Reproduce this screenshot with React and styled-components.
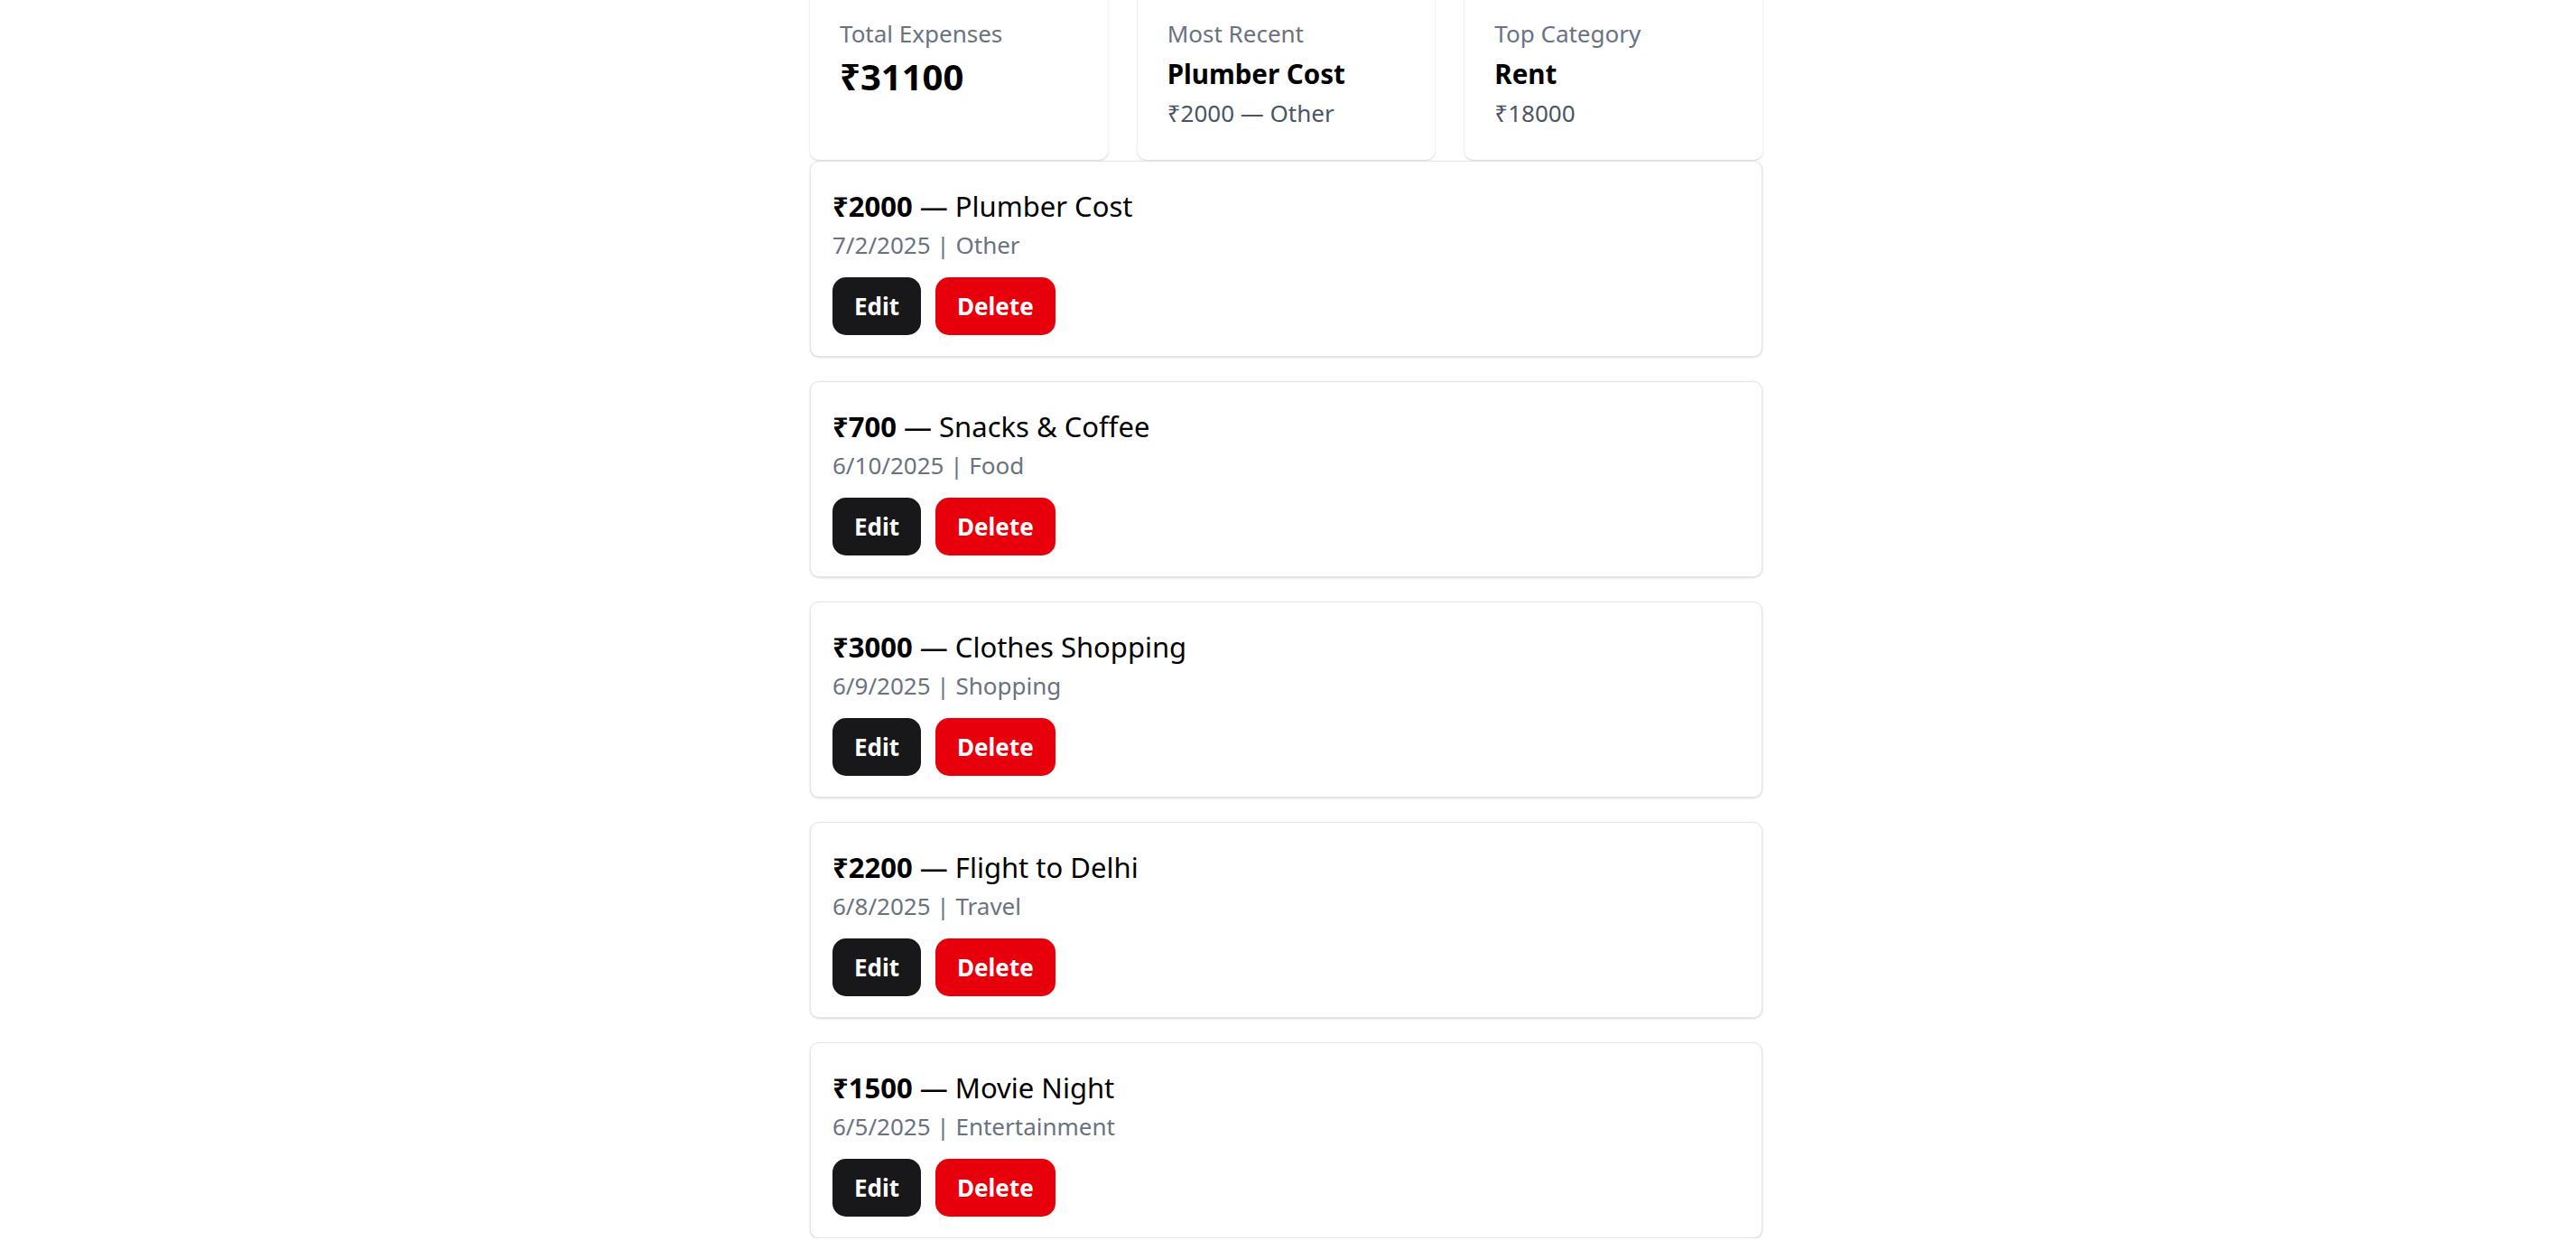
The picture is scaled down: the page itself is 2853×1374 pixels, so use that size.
import React from "react";
import styled, { createGlobalStyle } from "styled-components";

const GlobalStyle = createGlobalStyle`
  html, body { margin: 0; padding: 0; background: #ffffff; }
  body { font-family: "Noto Sans", "Open Sans", "DejaVu Sans", sans-serif; color: #000; overflow: hidden; }
  * { box-sizing: border-box; }
`;

const Page = styled.div`
  width: 1055px;
  margin-left: calc((100% - 1055px) / 2 - 2px);
  display: flex;
  flex-direction: column;
`;

const StatsGrid = styled.div`
  display: grid;
  grid-template-columns: repeat(3, 1fr);
  gap: 33px;
  margin-top: -16px;
  margin-bottom: 1px;
`;

const StatCard = styled.div`
  background: #fff;
  border-radius: 10px;
  box-shadow: 0 1px 3px rgba(0, 0, 0, 0.12), 0 1px 2px rgba(0, 0, 0, 0.06);
  padding: 33px 33px 34px;
  display: flex;
  flex-direction: column;
`;

const StatLabel = styled.div`
  font-size: 26px;
  line-height: 40px;
  color: #6a7282;
`;

const StatValue = styled.div`
  font-size: 40px;
  line-height: 52px;
  font-weight: 700;
  margin-top: 2px;
`;

const StatTitle = styled.div`
  font-size: 29.5px;
  line-height: 40px;
  font-weight: 700;
  margin-top: 5px;
`;

const StatSub = styled.div`
  font-size: 26px;
  line-height: 36px;
  color: #4a5565;
  margin-top: 5px;
`;

const List = styled.div`
  display: flex;
  flex-direction: column;
  gap: 27px;
`;

const ExpenseCard = styled.div`
  background: #fff;
  border: 1px solid #e5e5e5;
  border-radius: 10px;
  box-shadow: 0 1px 3px rgba(0, 0, 0, 0.1), 0 1px 2px rgba(0, 0, 0, 0.06);
  padding: 27px 24px 23px;
  display: flex;
  flex-direction: column;
`;

const ExpenseTitle = styled.div`
  font-size: 31px;
  line-height: 44px;
  b { font-weight: 700; }
`;

const ExpenseMeta = styled.div`
  font-size: 26px;
  line-height: 42px;
  color: #6a7282;
`;

const Actions = styled.div`
  display: flex;
  gap: 16px;
  margin-top: 15px;
`;

const Button = styled.button`
  height: 64px;
  padding: 0 24px;
  border: none;
  border-radius: 15px;
  font-family: inherit;
  font-size: 26px;
  font-weight: 700;
  color: #fff;
  background: ${(p) => (p.$variant === "danger" ? "#e7000b" : "#18181b")};
  cursor: pointer;
`;

const expenses = [
  { amount: 2000, title: "Plumber Cost", date: "7/2/2025", category: "Other" },
  { amount: 700, title: "Snacks & Coffee", date: "6/10/2025", category: "Food" },
  { amount: 3000, title: "Clothes Shopping", date: "6/9/2025", category: "Shopping" },
  { amount: 2200, title: "Flight to Delhi", date: "6/8/2025", category: "Travel" },
  { amount: 1500, title: "Movie Night", date: "6/5/2025", category: "Entertainment" },
];

export default function App() {
  return (
    <>
      <GlobalStyle />
      <Page>
        <StatsGrid>
          <StatCard>
            <StatLabel>Total Expenses</StatLabel>
            <StatValue>₹31100</StatValue>
          </StatCard>
          <StatCard>
            <StatLabel>Most Recent</StatLabel>
            <StatTitle>Plumber Cost</StatTitle>
            <StatSub>₹2000 — Other</StatSub>
          </StatCard>
          <StatCard>
            <StatLabel>Top Category</StatLabel>
            <StatTitle>Rent</StatTitle>
            <StatSub>₹18000</StatSub>
          </StatCard>
        </StatsGrid>
        <List>
          {expenses.map((e) => (
            <ExpenseCard key={e.title}>
              <ExpenseTitle>
                <b>₹{e.amount}</b> — {e.title}
              </ExpenseTitle>
              <ExpenseMeta>
                {e.date} | {e.category}
              </ExpenseMeta>
              <Actions>
                <Button>Edit</Button>
                <Button $variant="danger">Delete</Button>
              </Actions>
            </ExpenseCard>
          ))}
        </List>
      </Page>
    </>
  );
}
